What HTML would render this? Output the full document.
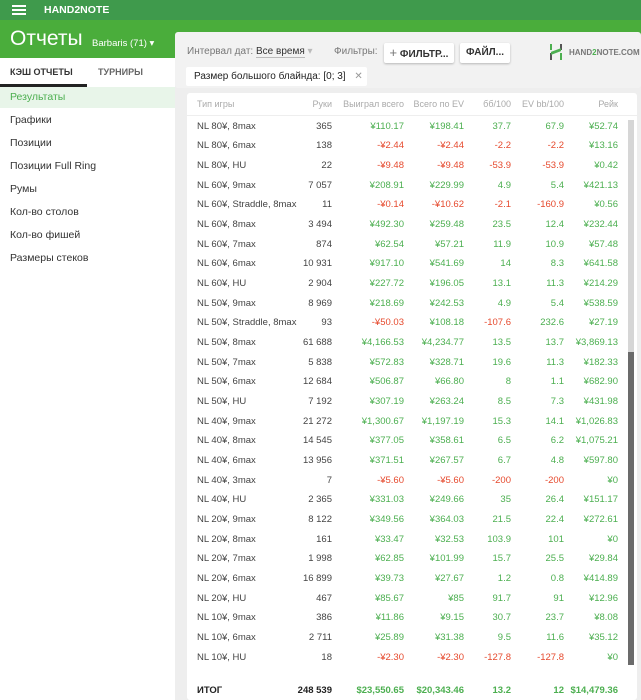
<!DOCTYPE html>
<html><head><meta charset="utf-8"><style>
*{margin:0;padding:0;box-sizing:border-box}
body{width:641px;height:700px;overflow:hidden;font-family:"Liberation Sans",sans-serif;background:#eeeeee;position:relative;font-size:9.5px;color:#333}
.top{position:absolute;left:0;top:0;width:641px;height:20px;background:#3f9a4c}
.hdr{position:absolute;left:0;top:20px;width:641px;height:38px;background:#4aad3b}
.side{position:absolute;left:0;top:58px;width:175px;height:642px;background:#fff}
.card{position:absolute;left:175px;top:32px;width:466px;height:56px;background:#f2f2f2;border-radius:3px}
.tbl{position:absolute;left:187px;top:93px;width:450px;height:607px;background:#fff;border-radius:3px}
.a{position:absolute;white-space:nowrap}
.g{color:#4caf50}.r{color:#e64a2e}
.btn{position:absolute;background:#fff;border-radius:2px;box-shadow:0 1px 2px rgba(0,0,0,.25);font-weight:bold;font-size:10px;color:#333;height:20px;line-height:20px;text-align:center}
.mi{position:absolute;left:10px;font-size:10.5px;color:#333}
</style></head><body>
<div class="top"></div>
<div class="a" style="left:12px;top:5px;width:14px;height:2px;background:#fff;box-shadow:0 4px 0 #fff,0 8px 0 #fff"></div>
<div class="a" style="left:44px;top:4px;color:#fff;font-weight:bold;font-size:10.5px">HAND2NOTE</div>
<div class="hdr"></div>
<div class="a" style="left:10px;top:27px;color:#fff;font-size:21px">Отчеты</div>
<div class="a" style="left:92px;top:38px;color:#fff;font-size:9.5px">Barbaris (71) ▾</div>
<div class="side"></div>
<div class="a" style="left:10px;top:67px;font-size:9px;font-weight:bold;color:#333">КЭШ ОТЧЕТЫ</div>
<div class="a" style="left:98px;top:67px;font-size:9px;font-weight:bold;color:#666">ТУРНИРЫ</div>
<div class="a" style="left:0;top:84px;width:87px;height:3px;background:#222"></div>
<div class="a" style="left:0;top:87px;width:175px;height:21px;background:#e8f5e9"></div>
<div class="mi" style="top:91px;color:#4caf50">Результаты</div>
<div class="mi" style="top:114px">Графики</div>
<div class="mi" style="top:137px">Позиции</div>
<div class="mi" style="top:160px">Позиции Full Ring</div>
<div class="mi" style="top:183px">Румы</div>
<div class="mi" style="top:206px">Кол-во столов</div>
<div class="mi" style="top:229px">Кол-во фишей</div>
<div class="mi" style="top:252px">Размеры стеков</div>
<div class="card"></div>
<div class="a" style="left:187px;top:46px;font-size:10px;color:#777">Интервал дат: <span style="color:#333;border-bottom:1px solid #bbb">Все время</span> <span style="color:#bbb">▾</span></div>
<div class="a" style="left:334px;top:46px;font-size:10px;color:#777">Фильтры:</div>
<div class="btn" style="left:384px;top:43px;width:70px"><span style="font-weight:normal;color:#777;font-size:13px">+</span> ФИЛЬТР...</div>
<div class="btn" style="left:460px;top:43px;width:50px">ФАЙЛ...</div>
<div class="a" style="left:550px;top:44px;width:2px;height:6px;background:#4caf50"></div>
<div class="a" style="left:550px;top:53px;width:2px;height:7px;background:#555"></div>
<div class="a" style="left:560px;top:44px;width:2px;height:6px;background:#555"></div>
<div class="a" style="left:560px;top:53px;width:2px;height:7px;background:#4caf50"></div>
<div class="a" style="left:551px;top:50px;width:10px;height:3px;background:#4caf50;transform:skewY(-20deg)"></div>
<div class="a" style="left:569px;top:48px;font-size:8px;font-weight:bold;color:#777">HAND<span style="color:#4caf50">2</span>NOTE.COM</div>
<div class="a" style="left:186px;top:67px;width:181px;height:19px;background:#fff;border-radius:2px"></div>
<div class="a" style="left:194px;top:71px;font-size:10px;color:#222">Размер большого блайнда: [0; 3] <span style="color:#999;margin-left:6px">✕</span></div>
<div class="tbl"></div>
<div class="a" style="left:187px;top:115px;width:450px;height:1px;background:#eee"></div>
<div class="a" style="left:628px;top:120px;width:6px;height:545px;background:#d6d6d6"></div>
<div class="a" style="left:628px;top:352px;width:6px;height:313px;background:#6b6b6b"></div>
<div id="t"></div>
<script>
var cols=[332,404,464,511,564,618];
var H=["Руки","Выиграл всего","Всего по EV","бб/100","EV bb/100","Рейк"];
var o='<div class="a" style="left:197px;top:99px;color:#aaa;font-size:9px">Тип игры</div>';
H.forEach(function(h,i){o+='<div class="a" style="right:'+(641-cols[i])+'px;top:99px;color:#aaa;font-size:9px">'+h+'</div>'});
var R=[["NL 80¥, 8max","365","¥110.17","¥198.41","37.7","67.9","¥52.74"],
["NL 80¥, 6max","138","-¥2.44","-¥2.44","-2.2","-2.2","¥13.16"],
["NL 80¥, HU","22","-¥9.48","-¥9.48","-53.9","-53.9","¥0.42"],
["NL 60¥, 9max","7 057","¥208.91","¥229.99","4.9","5.4","¥421.13"],
["NL 60¥, Straddle, 8max","11","-¥0.14","-¥10.62","-2.1","-160.9","¥0.56"],
["NL 60¥, 8max","3 494","¥492.30","¥259.48","23.5","12.4","¥232.44"],
["NL 60¥, 7max","874","¥62.54","¥57.21","11.9","10.9","¥57.48"],
["NL 60¥, 6max","10 931","¥917.10","¥541.69","14","8.3","¥641.58"],
["NL 60¥, HU","2 904","¥227.72","¥196.05","13.1","11.3","¥214.29"],
["NL 50¥, 9max","8 969","¥218.69","¥242.53","4.9","5.4","¥538.59"],
["NL 50¥, Straddle, 8max","93","-¥50.03","¥108.18","-107.6","232.6","¥27.19"],
["NL 50¥, 8max","61 688","¥4,166.53","¥4,234.77","13.5","13.7","¥3,869.13"],
["NL 50¥, 7max","5 838","¥572.83","¥328.71","19.6","11.3","¥182.33"],
["NL 50¥, 6max","12 684","¥506.87","¥66.80","8","1.1","¥682.90"],
["NL 50¥, HU","7 192","¥307.19","¥263.24","8.5","7.3","¥431.98"],
["NL 40¥, 9max","21 272","¥1,300.67","¥1,197.19","15.3","14.1","¥1,026.83"],
["NL 40¥, 8max","14 545","¥377.05","¥358.61","6.5","6.2","¥1,075.21"],
["NL 40¥, 6max","13 956","¥371.51","¥267.57","6.7","4.8","¥597.80"],
["NL 40¥, 3max","7","-¥5.60","-¥5.60","-200","-200","¥0"],
["NL 40¥, HU","2 365","¥331.03","¥249.66","35","26.4","¥151.17"],
["NL 20¥, 9max","8 122","¥349.56","¥364.03","21.5","22.4","¥272.61"],
["NL 20¥, 8max","161","¥33.47","¥32.53","103.9","101","¥0"],
["NL 20¥, 7max","1 998","¥62.85","¥101.99","15.7","25.5","¥29.84"],
["NL 20¥, 6max","16 899","¥39.73","¥27.67","1.2","0.8","¥414.89"],
["NL 20¥, HU","467","¥85.67","¥85","91.7","91","¥12.96"],
["NL 10¥, 9max","386","¥11.86","¥9.15","30.7","23.7","¥8.08"],
["NL 10¥, 6max","2 711","¥25.89","¥31.38","9.5","11.6","¥35.12"],
["NL 10¥, HU","18","-¥2.30","-¥2.30","-127.8","-127.8","¥0"]];
R.forEach(function(r,k){var y=120.5+k*19.67;
o+='<div class="a" style="left:197px;top:'+y+'px;color:#444">'+r[0]+'</div>';
for(var i=1;i<7;i++){var c=i==1?'':(r[i][0]=='-'?'r':'g');
o+='<div class="a '+c+'" style="right:'+(641-cols[i-1])+'px;top:'+y+'px;'+(i==1?'color:#444':'')+'">'+r[i]+'</div>';}});
var T=["248 539","$23,550.65","$20,343.46","13.2","12","$14,479.36"];
o+='<div class="a" style="left:197px;top:685px;font-weight:bold;color:#222">ИТОГ</div>';
T.forEach(function(t,i){o+='<div class="a '+(i?'g':'')+'" style="right:'+(641-cols[i])+'px;top:685px;font-weight:bold;'+(i?'':'color:#222')+'">'+t+'</div>'});
document.getElementById('t').innerHTML=o;
</script>
</body></html>
